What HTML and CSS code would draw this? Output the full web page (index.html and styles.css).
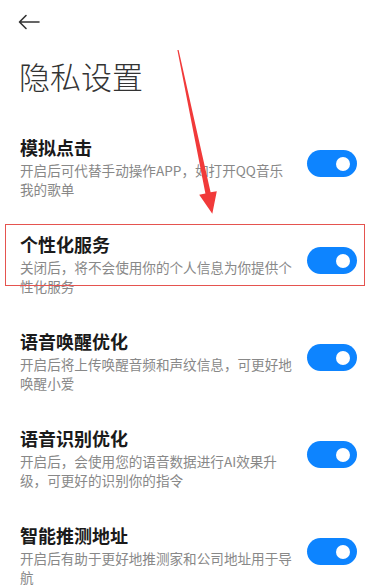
FILE: index.html
```html
<!DOCTYPE html>
<html lang="zh-CN">
<head>
<meta charset="utf-8">
<title>隐私设置</title>
<link rel="stylesheet" href="styles.css">
</head>
<body>
<div class="page">
  <div class="nav">
    <svg class="back" width="24" height="16" viewBox="0 0 24 16">
      <path d="M22 8 H3 M9 1.5 L2.5 8 L9 14.5" fill="none" stroke="#333" stroke-width="1.6" stroke-linecap="round" stroke-linejoin="round"/>
    </svg>
  </div>
  <h1 class="title">隐私设置</h1>
  <div class="list">
    <div class="item">
      <div class="text">
        <div class="name">模拟点击</div>
        <div class="desc">开启后可代替手动操作APP，如打开QQ音乐<br>我的歌单</div>
      </div>
      <div class="toggle"><span class="knob"></span></div>
    </div>
    <div class="item">
      <div class="text">
        <div class="name">个性化服务</div>
        <div class="desc">关闭后，将不会使用你的个人信息为你提供个<br>性化服务</div>
      </div>
      <div class="toggle"><span class="knob"></span></div>
    </div>
    <div class="item">
      <div class="text">
        <div class="name">语音唤醒优化</div>
        <div class="desc">开启后将上传唤醒音频和声纹信息，可更好地<br>唤醒小爱</div>
      </div>
      <div class="toggle"><span class="knob"></span></div>
    </div>
    <div class="item">
      <div class="text">
        <div class="name">语音识别优化</div>
        <div class="desc">开启后，会使用您的语音数据进行AI效果升<br>级，可更好的识别你的指令</div>
      </div>
      <div class="toggle"><span class="knob"></span></div>
    </div>
    <div class="item">
      <div class="text">
        <div class="name">智能推测地址</div>
        <div class="desc">开启后有助于更好地推测家和公司地址用于导<br>航</div>
      </div>
      <div class="toggle"><span class="knob"></span></div>
    </div>
  </div>

  <div class="highlight"></div>
  <svg class="pointer" width="378" height="587" viewBox="0 0 378 587">
    <polygon points="177.4,50 178.6,50 210.6,192.2 216.8,191.2 212.3,213.8 199.2,194.8 205.4,193.4" fill="#f13a3a"/>
  </svg>
</div>
</body>
</html>
```

FILE: styles.css
```css
html, body {
  margin: 0;
  padding: 0;
  background: #ffffff;
}

body {
  font-family: "Noto Sans CJK SC", "Noto Sans", sans-serif;
  color: #1a1a1a;
}

.page {
  position: relative;
  width: 378px;
  height: 587px;
  overflow: hidden;
}

.nav {
  height: 44px;
  display: flex;
  align-items: center;
  padding-left: 17px;
}

.back {
  display: block;
  margin-top: -1px;
}

.title {
  margin: 10px 0 0 0;
  padding-left: 19px;
  font-size: 31px;
  line-height: 44px;
  font-weight: 300;
  color: #333333;
}

.list {
  display: flex;
  flex-direction: column;
  gap: 32px;
  padding: 36px 21px 0 20px;
}

.item {
  display: flex;
  align-items: center;
  justify-content: space-between;
  height: 65px;
}

.text {
  display: flex;
  flex-direction: column;
}

.name {
  font-size: 18px;
  line-height: 26px;
  font-weight: 700;
  color: #1a1a1a;
}

.desc {
  margin-top: 1px;
  font-size: 13.6px;
  line-height: 19.5px;
  color: #888888;
  white-space: nowrap;
}

.toggle {
  width: 50px;
  height: 27px;
  border-radius: 14px;
  background: #0d84ff;
  display: flex;
  align-items: center;
  justify-content: flex-end;
  padding-right: 7px;
  box-sizing: border-box;
  margin-bottom: 6px;
  flex: none;
}

.knob {
  width: 14px;
  height: 14px;
  border-radius: 50%;
  background: #ffffff;
}

.highlight {
  position: absolute;
  left: 5px;
  top: 224px;
  width: 360px;
  height: 62px;
  border: 1px solid #e5534f;
  box-sizing: border-box;
}

.pointer {
  position: absolute;
  left: 0;
  top: 0;
  pointer-events: none;
}
```
